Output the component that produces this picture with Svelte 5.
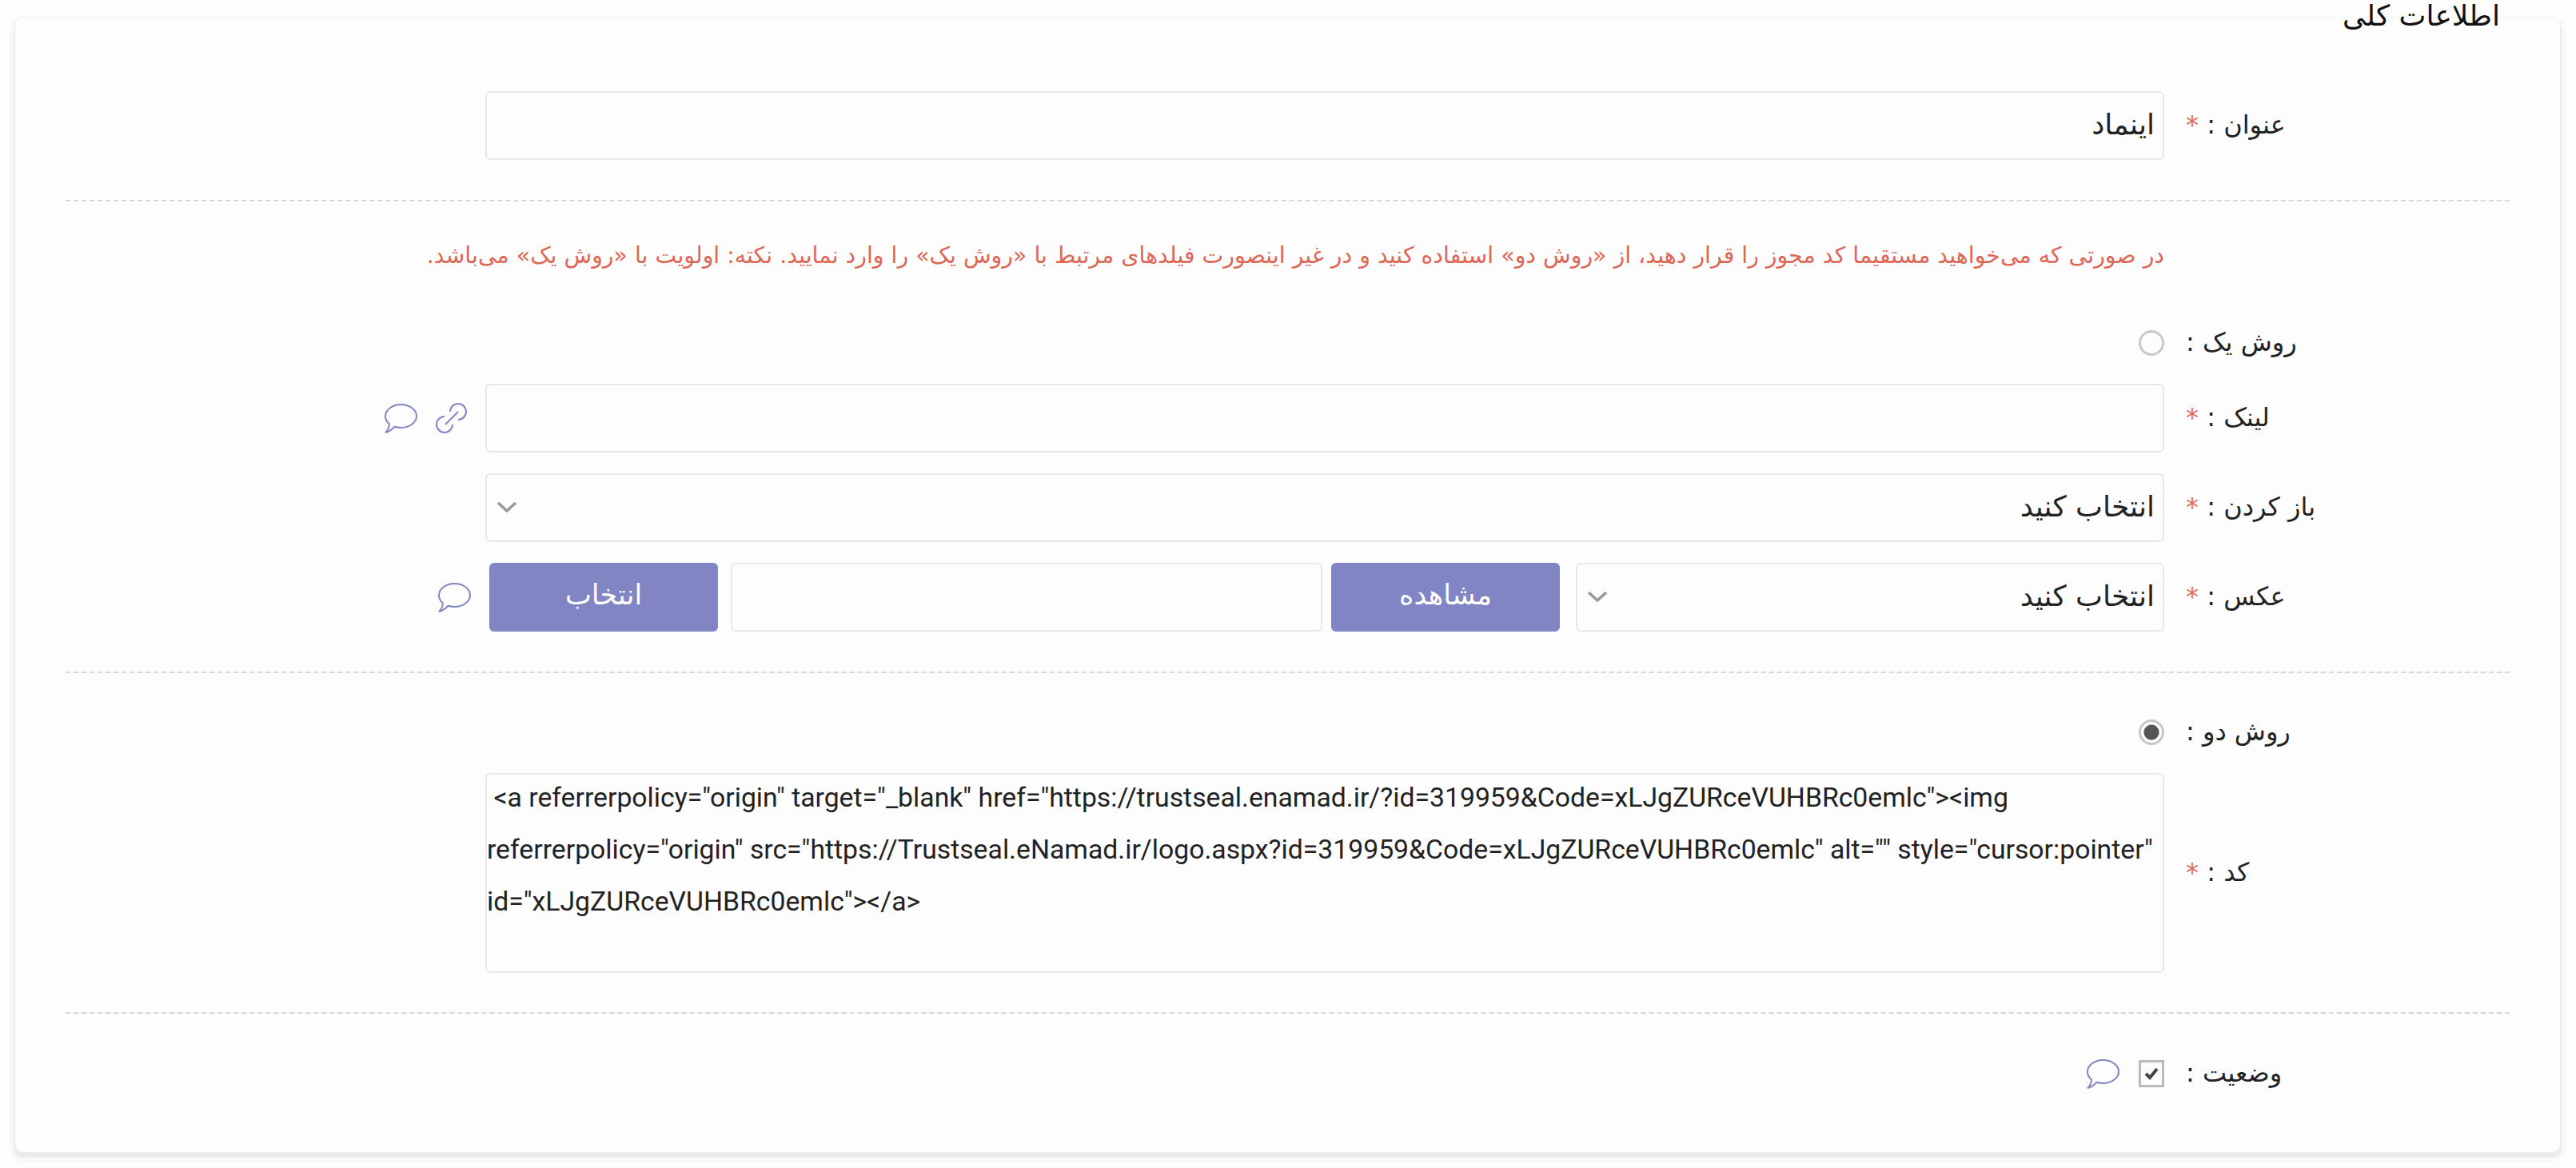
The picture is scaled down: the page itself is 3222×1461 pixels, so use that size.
<script lang="ts">
  const code = ' <a referrerpolicy="origin" target="_blank" href="https://trustseal.enamad.ir/?id=319959&Code=xLJgZURceVUHBRc0emlc"><img referrerpolicy="origin" src="https://Trustseal.eNamad.ir/logo.aspx?id=319959&Code=xLJgZURceVUHBRc0emlc" alt="" style="cursor:pointer" id="xLJgZURceVUHBRc0emlc"></a>';
</script>

{#snippet chat()}
  <svg class="chat" viewBox="0 0 41 37" aria-hidden="true">
    <path d="M6 25.500C3 23 1 19.500 1 15.500 1 7.500 10 1 20.500 1S40 7.500 40 15.500 31 30 20.500 30c-3 0-5.500-.4-8-1.200C9.500 32 6 35 1 36c3-2.500 4.500-6 5-10.500z" />
  </svg>
{/snippet}

{#snippet arrow()}
  <svg class="arrow" viewBox="0 0 26 14" aria-hidden="true">
    <path d="M2 2l11 10L24 2" />
  </svg>
{/snippet}

<div class="page" dir="rtl">
  <section class="card">
    <h2 class="title">اطلاعات کلی</h2>

    <div class="row first">
      <label class="label">عنوان : <span class="req">*</span></label>
      <div class="field"><input class="input" value="اینماد" /></div>
    </div>

    <hr class="sep" />

    <div class="row note-row">
      <span class="label"></span>
      <p class="note">در صورتی که می‌خواهید مستقیما کد مجوز را قرار دهید، از «روش دو» استفاده کنید و در غیر اینصورت فیلدهای مرتبط با «روش یک» را وارد نمایید. نکته: اولویت با «روش یک» می‌باشد.</p>
    </div>

    <div class="row radio-row">
      <label class="label">روش یک :</label>
      <div class="field"><span class="radio"></span></div>
    </div>

    <div class="row link-row">
      <label class="label">لینک : <span class="req">*</span></label>
      <div class="field"><input class="input" /></div>
      <div class="side">
        <svg class="link" viewBox="0 0 39 39" aria-hidden="true">
          <path d="M18 11a10 10 0 1 1 10 10" />
          <path d="M11 17a10 10 0 1 0 10 10" />
          <path d="M12 27L28 11" />
        </svg>
        {@render chat()}
      </div>
    </div>

    <div class="row open-row">
      <label class="label">باز کردن : <span class="req">*</span></label>
      <div class="field">
        <div class="select"><span>انتخاب کنید</span>{@render arrow()}</div>
      </div>
    </div>

    <div class="row image-row">
      <label class="label">عکس : <span class="req">*</span></label>
      <div class="field image-field">
        <div class="select small"><span>انتخاب کنید</span>{@render arrow()}</div>
        <button class="btn view">مشاهده</button>
        <input class="input path" />
        <button class="btn pick">انتخاب</button>
      </div>
      <div class="side tight">{@render chat()}</div>
    </div>

    <hr class="sep second" />

    <div class="row radio-row two">
      <label class="label">روش دو :</label>
      <div class="field"><span class="radio on"></span></div>
    </div>

    <div class="row code-row">
      <label class="label">کد : <span class="req">*</span></label>
      <div class="field">
        <div class="code" dir="ltr"><div class="code-text">{code}</div></div>
      </div>
    </div>

    <hr class="sep third" />

    <div class="row status-row">
      <label class="label">وضعیت :</label>
      <div class="field status">
        <span class="check">
          <svg viewBox="0 0 20 18" aria-hidden="true"><path d="M3 9l5 5 9-11" /></svg>
        </span>
        {@render chat()}
      </div>
    </div>
  </section>
</div>

<style>
  :global(body) {
    margin: 0;
    background: #fdfdfd;
  }
  .page {
    padding: 23px 20px 20px 19px;
    font-family: "DejaVu Sans", "Noto Sans", sans-serif;
    color: #222;
    font-size: 32px;
  }
  .card {
    display: flow-root;
    background: #fdfdfd;
    border-radius: 10px;
    box-shadow: 0 5px 0 2px #ebebeb, 0 5px 0 7px #f8f8f8;
    padding: 0 63px;
    height: 1418px;
    box-sizing: border-box;
  }
  .title {
    margin: -28px 12px 0 0;
    font-size: 36px;
    font-weight: 400;
    line-height: 50px;
    color: #111;
  }
  .row {
    display: flex;
    align-items: center;
  }
  .first { margin-top: 69px; }
  .label {
    flex: 0 0 405px;
    margin-left: 27px;
    padding-bottom: 3px;
    text-align: left;
    white-space: nowrap;
  }
  .req { color: #e06a5a; }
  .field {
    flex: 0 0 2100px;
    display: flex;
    align-items: center;
  }
  .input, .select {
    box-sizing: border-box;
    width: 100%;
    height: 86px;
    border: 2px solid #e8e8e8;
    border-radius: 6px;
    background: #fdfdfd;
    font: inherit;
    font-size: 36px;
    color: #222;
    padding: 0 10px 3px;
  }
  .input:focus { outline: none; }
  .select {
    display: flex;
    align-items: center;
    justify-content: space-between;
  }
  .arrow {
    width: 26px;
    height: 14px;
    margin-left: 2px;
    fill: none;
    stroke: #999;
    stroke-width: 3.500;
  }
  .sep {
    border: 0;
    border-top: 2px dashed #d8d8d8;
    margin: 50px 0 0;
  }
  .note-row { margin-top: 51px; }
  .note {
    margin: 0;
    flex: 1;
    font-size: 28.400px;
    line-height: 34px;
    color: #dd6655;
    white-space: nowrap;
  }
  .radio-row { height: 32px; margin-top: 76px; }
  .radio {
    box-sizing: border-box;
    width: 32px;
    height: 32px;
    border: 3px solid #c8c8c8;
    border-radius: 50%;
    background: #fdfdfd;
    display: block;
  }
  .radio.on { background: radial-gradient(circle, #555 0 9px, #fdfdfd 10px); }
  .link-row { margin-top: 35px; }
  .open-row { margin-top: 26px; }
  .image-row { margin-top: 26px; }
  .side {
    display: flex;
    align-items: center;
    gap: 23px;
    margin-right: 23px;
  }
  .side.tight { margin-right: 18px; }
  .select.small { flex: 0 0 736px; width: auto; }
  .btn {
    flex: 0 0 286px;
    height: 86px;
    border: 0;
    border-radius: 6px;
    background: #8285c3;
    color: #fff;
    font: inherit;
    font-size: 35px;
    padding: 0 0 6px;
  }
  .view { margin-right: 20px; }
  .path { flex: 1; width: auto; min-width: 0; margin-right: 11px; }
  .pick { margin: 0 16px 0 5px; }
  .chat, .link {
    display: block;
    fill: none;
    stroke: #8285c3;
    stroke-width: 2;
  }
  .chat { width: 41px; height: 37px; }
  .link { width: 39px; height: 39px; }
  .second { margin-top: 50px; }
  .two { margin-top: 58px; }
  .code-row { margin-top: 35px; }
  .code {
    box-sizing: border-box;
    width: 100%;
    height: 250px;
    border: 2px solid #e8e8e8;
    border-radius: 6px;
    background: #fdfdfd;
    color: #222;
    padding-right: 4px;
    overflow: hidden;
    font-family: Roboto, sans-serif;
    font-size: 33.750px;
    line-height: 65px;
    white-space: pre-wrap;
    overflow-wrap: anywhere;
    text-align: left;
  }
  .code-text { margin-top: -4px; }
  .third { margin-top: 49px; }
  .status-row { margin-top: 58px; height: 34px; }
  .status { gap: 24px; }
  .check {
    box-sizing: border-box;
    width: 32px;
    height: 34px;
    border: 3px solid #bbb;
    display: flex;
    align-items: center;
    justify-content: center;
  }
  .check svg {
    width: 20px;
    height: 18px;
    fill: none;
    stroke: #444;
    stroke-width: 4;
  }
</style>
